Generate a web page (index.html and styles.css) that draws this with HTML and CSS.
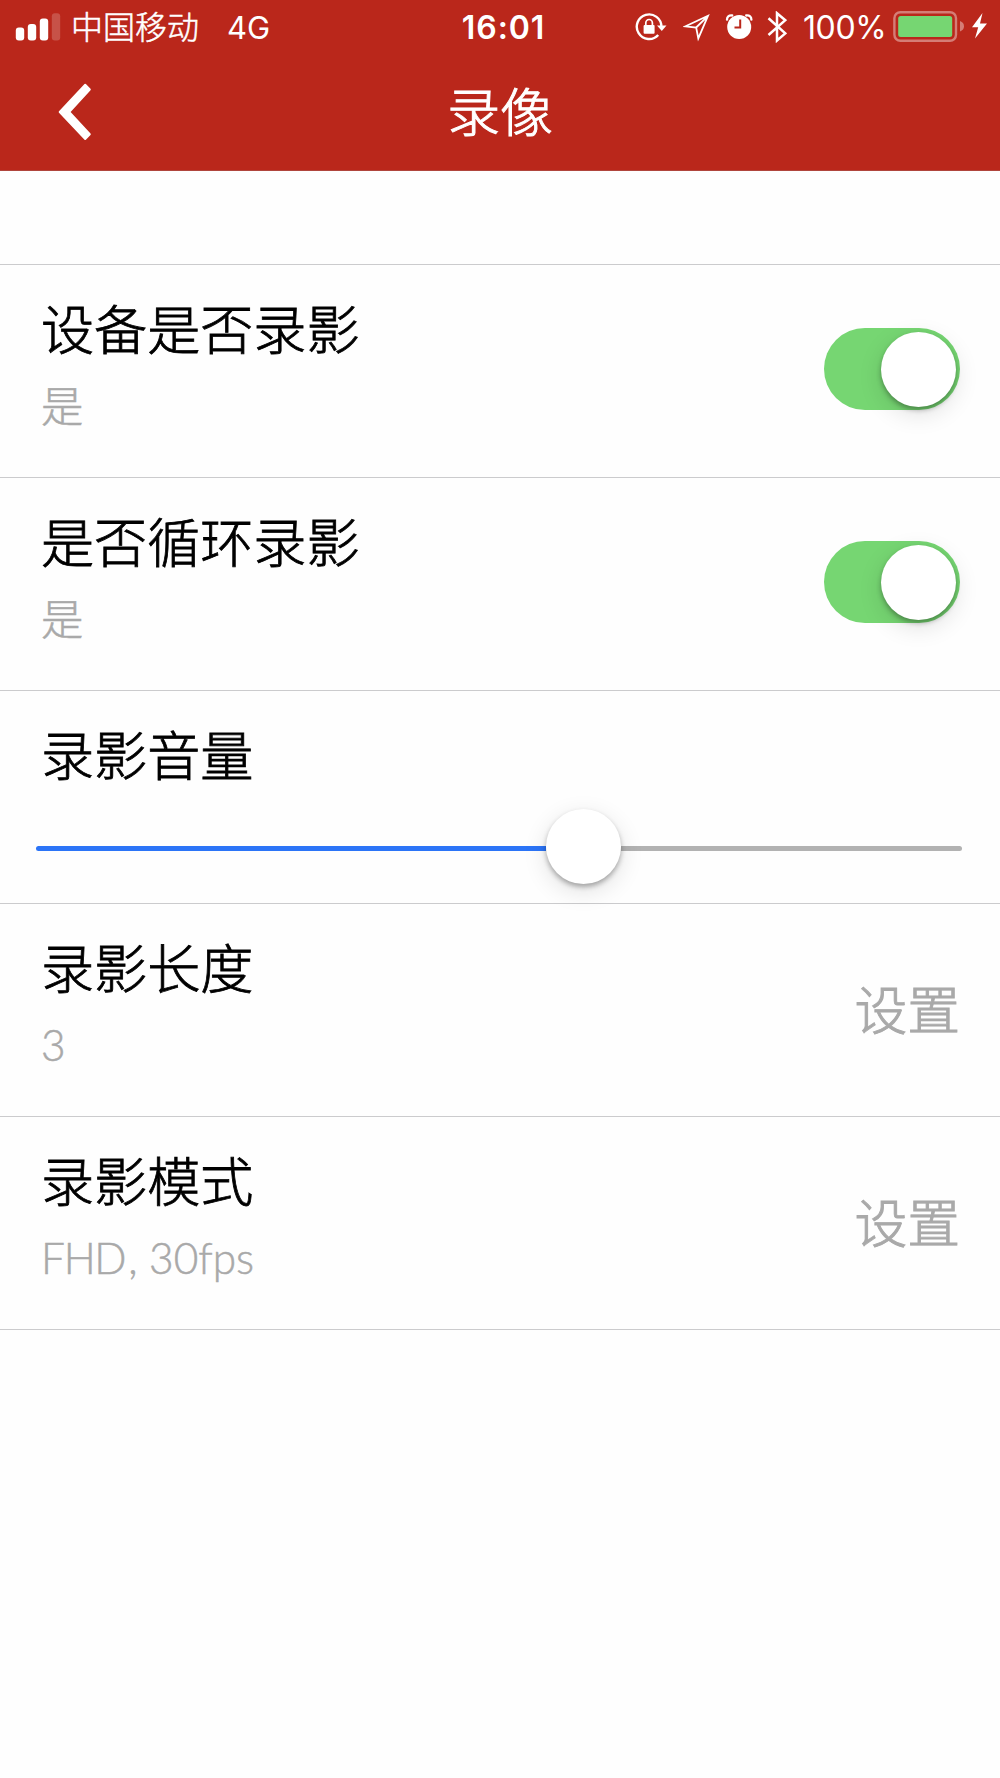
FILE: index.html
```html
<!DOCTYPE html>
<html lang="zh-CN">
<head>
<meta charset="utf-8">
<title>录像</title>
<link rel="stylesheet" href="styles.css">
</head>
<body>
<header class="header">
  <div class="status">
    <div class="status-left">
      <svg class="signal" width="46" height="28" viewBox="15 13 46 28" fill="#fff">
        <rect x="15.8" y="27.6" width="8.4" height="13" rx="3"/>
        <rect x="27.8" y="24" width="8.4" height="16.6" rx="3"/>
        <rect x="39.8" y="18.4" width="8.4" height="22.2" rx="3"/>
        <rect x="51.8" y="13.2" width="8.4" height="27.4" rx="3" opacity=".2"/>
      </svg>
      <span class="carrier">中国移动</span>
      <span class="network">4G</span>
    </div>
    <span class="time">16:01</span>
    <div class="status-right">
      <svg width="32" height="30" viewBox="635 12 32 30">
        <path d="M661.4 26.7A12.3 12.3 0 1 0 658.2 35" fill="none" stroke="#fff" stroke-width="2.4"/>
        <path d="M657 25.5h9.5l-4.7 5.6z" fill="#fff"/>
        <rect x="643.6" y="25" width="11" height="8.8" rx="1" fill="#fff"/>
        <path d="M645.8 25.5v-2.4a3.3 3.6 0 0 1 6.6 0v2.4" fill="none" stroke="#fff" stroke-width="1.7"/>
      </svg>
      <svg class="location" width="28" height="30" viewBox="683 12 28 30">
        <path d="M708 15.8L685.6 26.3L696.2 27.5L698.3 38.4ZM696.2 27.5L708 15.8" fill="none" stroke="#fff" stroke-width="1.8" stroke-linejoin="miter"/>
      </svg>
      <svg class="alarm" width="28" height="30" viewBox="725 12 28 30">
        <circle cx="739.2" cy="27" r="12" fill="#fff"/>
        <path d="M727 19.7q0-4.7 5.2-4.2M751.4 19.7q0-4.7-5.2-4.2" fill="none" stroke="#fff" stroke-width="2.3" stroke-linecap="round"/>
        <path d="M740.2 19.5v8h-5.7" fill="none" stroke="#ba271b" stroke-width="2"/>
      </svg>
      <svg class="bluetooth" width="20" height="32" viewBox="767 11 20 32">
        <path d="M768.5 18.2L785.3 33.4L777 40.5V13.2L785.3 20.2L768.5 35" fill="none" stroke="#fff" stroke-width="2.5"/>
      </svg>
      <span class="percent">100%</span>
      <svg class="battery" width="96" height="32" viewBox="893 12 96 32">
        <rect x="894.4" y="13.2" width="61.6" height="28.6" rx="6" fill="none" stroke="#fff" stroke-width="2.4" opacity=".4"/>
        <rect x="898.2" y="17" width="54" height="21" rx="2.5" fill="#76d672"/>
        <path d="M960 22v10.5q4-1.5 4-5.2t-4-5.3z" fill="#fff" opacity=".4"/>
        <path d="M982.5 14L972 28.2h6.2L975 39.5L987 24.6h-7z" fill="#fff"/>
      </svg>
    </div>
  </div>
  <nav class="navbar">
    <svg class="back" width="34" height="60" viewBox="58 82 34 60" aria-label="返回">
      <path d="M59.7 112L85.2 84.8L89.8 89.5L69.2 112L89.8 134.3L85.2 139Z" fill="#fff" stroke="#fff" stroke-width="2" stroke-linejoin="round"/>
    </svg>
    <h1 class="title">录像</h1>
  </nav>
</header>
<main class="list">
  <section class="row">
    <div class="label"><h2>设备是否录影</h2><p>是</p></div>
    <div class="toggle"><div class="knob"></div></div>
  </section>
  <section class="row">
    <div class="label"><h2>是否循环录影</h2><p>是</p></div>
    <div class="toggle"><div class="knob"></div></div>
  </section>
  <section class="row row-slider">
    <div class="label"><h2>录影音量</h2></div>
    <div class="slider"><div class="filled"></div><div class="knob slider-knob"></div><div class="rest"></div></div>
  </section>
  <section class="row">
    <div class="label"><h2>录影长度</h2><p>3</p></div>
    <span class="action">设置</span>
  </section>
  <section class="row">
    <div class="label"><h2>录影模式</h2><p><span class="caps">FHD</span>, 30fps</p></div>
    <span class="action">设置</span>
  </section>
</main>
</body>
</html>
```
FILE: styles.css
```css
* { box-sizing: border-box; }
body {
  margin: 0;
  min-height: 1778px;
  background: #fefefe;
  color: #000;
  font-family: Lato, "Noto Sans CJK SC", sans-serif;
}
svg { display: block; flex: none; }
h1, h2, p { margin: 0; font-weight: 300; }
.header {
  height: 171px;
  background: #ba271b;
  border-bottom: 1px solid #b0453d;
  color: #fff;
}
.status {
  display: grid;
  grid-template-columns: 1fr auto 1fr;
  height: 54px;
  padding: 0 11px 0 15px;
  font-family: Inter, "Noto Sans CJK SC", sans-serif;
  font-size: 32px;
  line-height: 56px;
  white-space: nowrap;
}
.status-left, .status-right { display: flex; align-items: center; height: 54px; }
.status-right { justify-content: flex-end; }
.carrier, .network, .percent { padding-top: 2px; }
.carrier { margin-left: 10px; font-weight: 300; -webkit-text-stroke: .5px; }
.network { margin-left: 28px; font-size: 31px; }
.time { padding-left: 3px; font-weight: 600; letter-spacing: .9px; }
.location { margin-left: 16px; }
.alarm { margin-left: 14px; }
.bluetooth { margin-left: 14px; }
.percent { margin-left: 16px; width: 81px; letter-spacing: -.4px; }
.battery { margin-left: 9px; }
.navbar {
  display: grid;
  grid-template-columns: 1fr auto 1fr;
  align-items: center;
  height: 116px;
}
.back { margin-left: 58px; }
.title { font-size: 52.8px; line-height: 115px; height: 116px; font-weight: 300; -webkit-text-stroke: 1px; }
.list { padding-top: 93px; }
.row {
  display: flex;
  justify-content: space-between;
  height: 213px;
  padding: 0 40px 0 41px;
  border-top: 1px solid #cbcbcd;
}
.row:last-child { height: 214px; border-bottom: 1px solid #cbcbcd; }
.label { padding-top: 26px; }
.label h2 { font-size: 53.1px; line-height: 78px; -webkit-text-stroke: .8px; }
.label p { font-size: 42.4px; line-height: 60px; margin-top: 7px; color: #a9a9a9; -webkit-text-stroke: .5px; }
.caps { letter-spacing: -1.3px; margin-right: 3px; }
.toggle {
  display: flex;
  align-items: center;
  justify-content: flex-end;
  width: 136px;
  height: 82px;
  margin-top: 63px;
  padding-right: 4px;
  border-radius: 41px;
  background: #76d672;
}
.knob {
  flex: none;
  width: 75px;
  height: 75px;
  border-radius: 50%;
  background: #fff;
  box-shadow: 0 3px 5px rgba(0,0,0,.3), 0 7px 24px rgba(0,0,0,.12);
}
.action { margin-top: 67px; font-size: 52.8px; line-height: 78px; font-weight: 300; color: #a9a9a9; -webkit-text-stroke: .9px; }
.row-slider { flex-direction: column; justify-content: flex-start; }
.slider { display: flex; align-items: center; width: 926px; height: 76px; margin: 13px 0 0 -5px; }
.filled, .rest { height: 5px; margin-top: 5px; }
.filled { width: 510px; border-radius: 3px 0 0 3px; background: #2b74f7; }
.rest { flex: 1; border-radius: 0 3px 3px 0; background: #b2b2b2; }
.slider-knob { position: relative; }
```
